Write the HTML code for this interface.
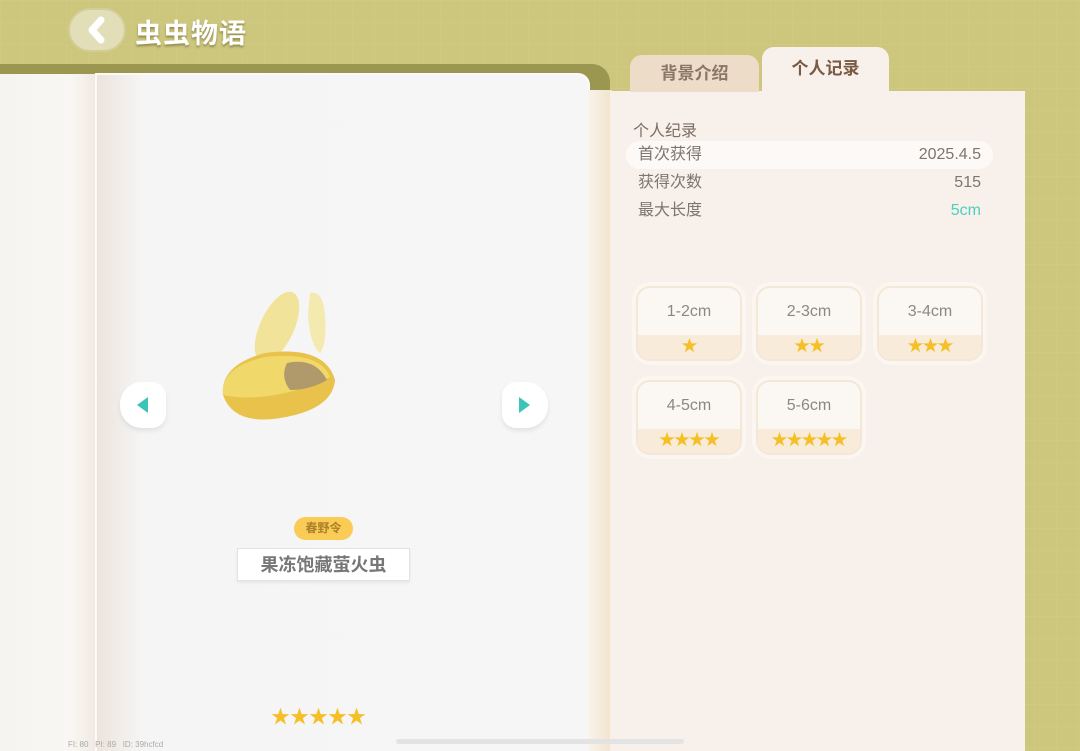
<!DOCTYPE html>
<html><head><meta charset="utf-8"><style>
*{margin:0;padding:0;box-sizing:border-box}
html,body{width:1080px;height:751px;overflow:hidden}
body{position:relative;background:#cdc77e;font-family:"Liberation Sans","Noto Sans CJK SC",sans-serif;
background-image:linear-gradient(rgba(255,255,255,.04) 1px,transparent 1px),linear-gradient(90deg,rgba(255,255,255,.04) 1px,transparent 1px);background-size:22px 22px}
.abs{position:absolute}
.back{left:68px;top:8px;width:58px;height:44px;border-radius:22px;background:#e2deb8;border:2px solid #d3cd98}
.title{left:135px;top:12px;font-size:27px;font-weight:bold;color:#fff;text-shadow:0 2px 2px rgba(90,80,30,.5);letter-spacing:1px}
.bookbg{left:0;top:64px;width:610px;height:687px;background:#9b9650;border-radius:0 18px 0 0}
.lpage{left:0;top:74px;width:100px;height:677px;background:linear-gradient(90deg,#f6f4f0,#f9f7f3 70%,#efe7df)}
.page{left:95px;top:73px;width:495px;height:678px;background:linear-gradient(90deg,#ece4dc,#f5f5f5 45px,#f6f6f6);border-radius:0 12px 0 0;border:2px solid #fbfaf6;border-bottom:0}
.spine{left:588px;top:90px;width:24px;height:661px;background:linear-gradient(90deg,#f8f3ec,#f2e3cc)}
.panel{left:610px;top:91px;width:415px;height:660px;background:#f8f0ea}
.tab{height:44px;border-radius:12px 12px 0 0;font-size:17px;font-weight:bold;text-align:center}
.t1{left:630px;top:55px;width:129px;height:37px;background:#ecdcc8;color:#8b7565;line-height:38px}
.t2{left:762px;top:47px;width:127px;background:#f8f0ea;color:#7a5a45;line-height:44px}
.lbl{font-size:16px;color:#7d6d65}
.row{left:626px;width:367px;height:28px;font-size:16px;color:#7d7570;line-height:28px;padding:0 12px}
.row span{float:right}
.card{width:106px;height:75px;border-radius:14px;background:#fbf8f4;border:2px solid #f5e7d6;box-shadow:0 0 0 4px #fbf6f1;overflow:hidden}
.card .t{height:47px;line-height:48px;text-align:center;font-size:16px;color:#888}
.card .s{height:26px;background:#f8ebda;text-align:center;color:#f5bf25;font-size:16px;line-height:24px;letter-spacing:-1px}
.arrow{width:46px;height:46px;background:#fff;border-radius:14px 22px 22px 14px;box-shadow:0 3px 5px rgba(0,0,0,.08)}
</style></head><body>
<div class="abs back"><svg width="54" height="40" viewBox="0 0 54 40"><path d="M31 10 L22 20 L31 30" stroke="#fff" stroke-width="7" fill="none" stroke-linecap="round" stroke-linejoin="round"/></svg></div>
<div class="abs title">虫虫物语</div>
<div class="abs bookbg"></div>
<div class="abs lpage"></div>
<div class="abs page"></div>
<div class="abs spine"></div>
<div class="abs panel"></div>
<div class="abs tab t1">背景介绍</div>
<div class="abs tab t2">个人记录</div>
<div class="abs lbl" style="left:633px;top:117px">个人纪录</div>
<div class="abs row" style="top:141px;background:#fcf9f6;border-radius:14px">首次获得<span>2025.4.5</span></div>
<div class="abs row" style="top:169px">获得次数<span>515</span></div>
<div class="abs row" style="top:197px">最大长度<span style="color:#4ccfc0">5cm</span></div>
<div class="abs card" style="left:636px;top:286px"><div class="t">1-2cm</div><div class="s">★</div></div>
<div class="abs card" style="left:756px;top:286px"><div class="t">2-3cm</div><div class="s">★★</div></div>
<div class="abs card" style="left:877px;top:286px"><div class="t">3-4cm</div><div class="s">★★★</div></div>
<div class="abs card" style="left:636px;top:380px"><div class="t">4-5cm</div><div class="s">★★★★</div></div>
<div class="abs card" style="left:756px;top:380px"><div class="t">5-6cm</div><div class="s">★★★★★</div></div>
<svg class="abs" style="left:215px;top:285px" width="130" height="140" viewBox="0 0 130 140">
<ellipse cx="62" cy="42" rx="17" ry="38" transform="rotate(25 62 42)" fill="#f1e39a"/>
<path d="M95 8 Q108 5 110 30 Q112 60 105 68 Q95 60 93 30Z" fill="#f4eab0"/>
<path d="M8 110 Q5 80 50 68 Q110 60 120 95 Q118 120 80 130 Q20 145 8 110Z" fill="#e8c24a"/>
<path d="M8 110 Q5 82 50 72 Q105 66 115 92 Q90 105 60 110 Q30 115 8 110Z" fill="#f1d86a"/>
<path d="M72 78 Q100 72 112 95 Q95 105 75 105 Q65 92 72 78Z" fill="#b09a6c"/>
</svg>
<div class="abs arrow" style="left:120px;top:382px;border-radius:22px 14px 14px 22px"><svg width="46" height="46"><path d="M28 15 L17 23 L28 31Z" fill="#3cc4b6"/></svg></div>
<div class="abs arrow" style="left:502px;top:382px"><svg width="46" height="46"><path d="M17 15 L28 23 L17 31Z" fill="#3cc4b6"/></svg></div>
<div class="abs" style="left:294px;top:517px;width:59px;height:23px;border-radius:12px;background:#fbcc55;color:#a9802a;font-size:12px;text-align:center;line-height:23px;font-weight:bold">春野令</div>
<div class="abs" style="left:237px;top:548px;width:173px;height:33px;background:#fff;border:1px solid #e4e2de;box-shadow:0 2px 3px rgba(0,0,0,.06);font-size:18px;color:#777;text-align:center;line-height:33px;font-weight:bold">果冻饱藏萤火虫</div>
<div class="abs" style="left:271px;top:702px;color:#f5bf25;font-size:19px;letter-spacing:0px">★★★★★</div>
<div class="abs" style="left:68px;top:740px;font-size:8px;color:#aaa">FI: 80 &nbsp; PI: 89 &nbsp; ID: 39hcfcd</div>
<div class="abs" style="left:396px;top:739px;width:288px;height:5px;border-radius:3px;background:#e3e3e3"></div>
</body></html>
